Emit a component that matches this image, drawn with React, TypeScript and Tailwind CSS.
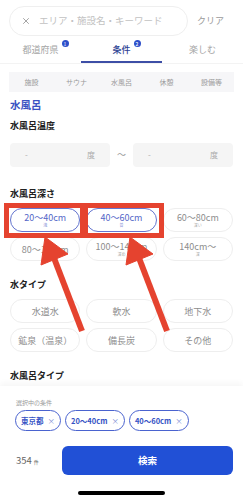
import { X } from 'lucide-react';

const depths = [
  { label: '20～40cm', sub: '浅', active: true },
  { label: '40～60cm', sub: '普', active: true },
  { label: '60～80cm', sub: '深い', active: false },
  { label: '80～100cm', sub: '', active: false },
  { label: '100～140cm', sub: '深め', active: false },
  { label: '140cm～', sub: '深', active: false },
];

const waters = ['水道水', '軟水', '地下水', '鉱泉（温泉）', '備長炭', 'その他'];

function Pill({ label, sub, active }: { label: string; sub?: string; active?: boolean }) {
  return (
    <div
      className={
        active
          ? 'flex h-[24px] flex-col items-center justify-center rounded-full border border-[#6475cf] text-[#5467c8]'
          : 'flex h-[24px] flex-col items-center justify-center rounded-full border border-[#eeeeee] text-[#8d8d8d]'
      }
    >
      <span className="text-[9px] leading-[11px]">{label}</span>
      {sub && <span className="text-[4px] leading-[5px] opacity-70">{sub}</span>}
    </div>
  );
}

function Chip({ label }: { label: string }) {
  return (
    <div className="flex h-[21px] items-center gap-[4px] rounded-full border border-[#4a63cf] px-[5px] text-[7.5px] font-bold text-[#3552c4]">
      <span>{label}</span>
      <span className="font-normal text-[#7f8fd6]">×</span>
    </div>
  );
}

export default function App() {
  return (
    <div className="relative flex h-[500px] w-[243px] flex-col overflow-hidden bg-white font-['Noto_Sans_CJK_JP','Noto_Sans',sans-serif]">
      <div className="min-h-0 flex-1 overflow-hidden">
        {/* search */}
        <div className="flex h-[36px] items-center px-[9px] pt-[5px]">
          <div className="flex h-[30px] w-[179px] items-center gap-[8px] rounded-full border border-[#efefef] px-[11px]">
            <X size={10} strokeWidth={1.6} className="text-[#777]" />
            <span className="text-[9.5px] text-[#c2c2c2]">エリア・施設名・キーワード</span>
          </div>
          <span className="ml-auto mr-[10px] text-[9px] text-[#9a9a9a]">クリア</span>
        </div>

        {/* tabs */}
        <div className="grid h-[28px] grid-cols-3 border-b border-[#f3f3f3]">
          <div className="flex items-center justify-center">
            <span className="relative text-[9px] text-[#a5a5a5]">
              都道府県
              <span className="absolute -right-[10px] -top-[3px] flex h-[7px] w-[7px] items-center justify-center rounded-full bg-[#2d4fc9] text-[5px] leading-none text-white">1</span>
            </span>
          </div>
          <div className="relative flex items-center justify-center">
            <span className="relative text-[9px] font-medium text-[#2c3f93]">
              条件
              <span className="absolute -right-[10px] -top-[3px] flex h-[7px] w-[7px] items-center justify-center rounded-full bg-[#2d4fc9] text-[5px] leading-none text-white">2</span>
            </span>
            <div className="absolute bottom-0 left-0 right-0 h-[2px] bg-[#3d4ea6]" />
          </div>
          <div className="flex items-center justify-center">
            <span className="text-[9px] text-[#a5a5a5]">楽しむ</span>
          </div>
        </div>

        {/* sub tabs */}
        <div className="mx-[9px] mt-[8px] flex h-[20px] items-center bg-[#f6f6f8] text-[7px] text-[#9a9a9a]">
          {['施設', 'サウナ', '水風呂', '休憩', '設備等'].map((t) => (
            <span key={t} className="flex-1 text-center">
              {t}
            </span>
          ))}
        </div>

        <div className="px-[10px]">
          <h2 className="mt-[5px] h-[16px] text-[10.5px] font-bold leading-[16px] text-[#3a51c2]">水風呂</h2>

          <h3 className="mt-[6px] h-[14px] text-[9px] font-bold leading-[14px] text-[#222]">水風呂温度</h3>
          <div className="mt-[10px] flex h-[24px] items-center">
            <div className="flex h-full w-[100px] items-center justify-between rounded-[4px] bg-[#f5f5f5] px-[15px] text-[8px] text-[#aaa]">
              <span>-</span>
              <span>度</span>
            </div>
            <span className="flex-1 text-center text-[9px] text-[#999]">～</span>
            <div className="flex h-full w-[100px] items-center justify-between rounded-[4px] bg-[#f5f5f5] px-[15px] text-[8px] text-[#aaa]">
              <span>-</span>
              <span>度</span>
            </div>
          </div>

          <h3 className="mt-[20px] h-[14px] text-[9px] font-bold leading-[14px] text-[#222]">水風呂深さ</h3>
          <div className="mt-[7px] grid grid-cols-3 gap-x-[6px] gap-y-[5px]">
            {depths.map((d) => (
              <Pill key={d.label} label={d.label} sub={d.sub} active={d.active} />
            ))}
          </div>

          <h3 className="mt-[17px] h-[14px] text-[9px] font-bold leading-[14px] text-[#222]">水タイプ</h3>
          <div className="mt-[7px] grid grid-cols-3 gap-x-[6px] gap-y-[5px]">
            {waters.map((w) => (
              <Pill key={w} label={w} />
            ))}
          </div>

          <h3 className="mt-[17px] h-[14px] text-[9px] font-bold leading-[14px] text-[#222]">水風呂タイプ</h3>
        </div>
      </div>

      {/* bottom panel */}
      <div className="shrink-0 bg-white pb-[5px] pt-[13px] shadow-[0_-3px_6px_rgba(0,0,0,0.04)]">
        <p className="px-[16px] text-[6px] leading-[8px] text-[#999]">選択中の条件</p>
        <div className="mt-[3px] flex gap-[4px] px-[15px]">
          <Chip label="東京都" />
          <Chip label="20～40cm" />
          <Chip label="40～60cm" />
        </div>
        <div className="mt-[15px] flex items-center pl-[16px] pr-[10px]">
          <span className="text-[9.5px] text-[#666]">
            354<span className="ml-[2px] text-[5px]">件</span>
          </span>
          <button className="ml-auto h-[29px] w-[171px] rounded-[6px] bg-[#2150d6] text-[9.5px] font-bold text-white">
            検索
          </button>
        </div>
        <div className="mx-auto mt-[16px] h-[4px] w-[87px] rounded-full bg-black" />
      </div>

      {/* annotations */}
      <svg className="pointer-events-none absolute left-0 top-0" width="243" height="500" viewBox="0 0 243 500">
        <rect x="6.5" y="205.5" width="76" height="30" fill="none" stroke="#e5432f" strokeWidth="5" />
        <rect x="85.5" y="205.5" width="76" height="30" fill="none" stroke="#e5432f" strokeWidth="5" />
        <g fill="#e5432f" stroke="#e5432f">
          <line x1="54" y1="258" x2="82" y2="331" strokeWidth="6" />
          <polygon points="45,237 68,254 41,265" strokeWidth="1" />
          <line x1="139" y1="258" x2="167" y2="331" strokeWidth="6" />
          <polygon points="130,237 153,254 126,265" strokeWidth="1" />
        </g>
      </svg>
    </div>
  );
}
